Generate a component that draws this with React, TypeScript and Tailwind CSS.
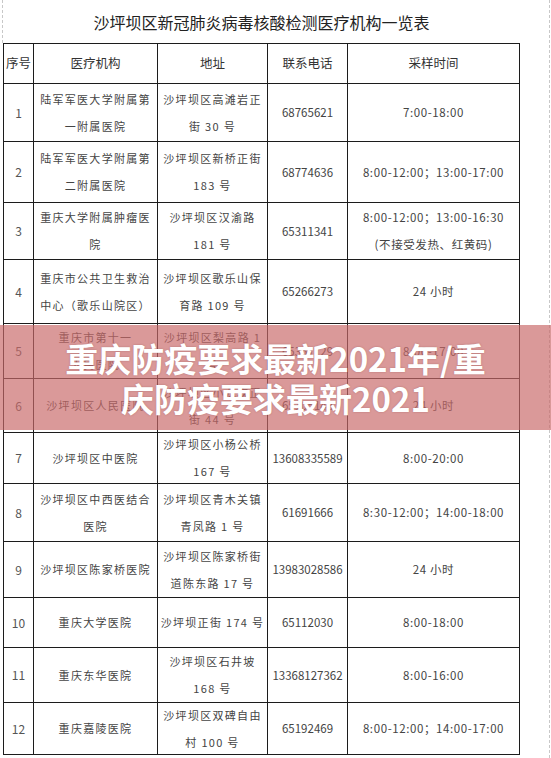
import React from "react";

type Row = {
  no: string;
  org: string[];
  addr: string[];
  phone: string;
  time: string[];
  h: string;
};

const rows: Row[] = [
  { no: "1", org: ["陆军军医大学附属第", "一附属医院"], addr: ["沙坪坝区高滩岩正", "街 30 号"], phone: "68765621", time: ["7:00-18:00"], h: "h-[58px]" },
  { no: "2", org: ["陆军军医大学附属第", "二附属医院"], addr: ["沙坪坝区新桥正街", "183 号"], phone: "68774636", time: ["8:00-12:00；13:00-17:00"], h: "h-[61px]" },
  { no: "3", org: ["重庆大学附属肿瘤医", "院"], addr: ["沙坪坝区汉渝路", "181 号"], phone: "65311341", time: ["8:00-12:00；13:00-16:30", "(不接受发热、红黄码)"], h: "h-[57px]" },
  { no: "4", org: ["重庆市公共卫生救治", "中心（歌乐山院区）"], addr: ["沙坪坝区歌乐山保", "育路 109 号"], phone: "65266273", time: ["24 小时"], h: "h-[64px]" },
  { no: "5", org: ["重庆市第十一", "人民医院"], addr: ["沙坪坝区梨高路 1", "号"], phone: "65351129", time: ["8:00-17:00"], h: "h-[55px]" },
  { no: "6", org: ["沙坪坝区人民医院"], addr: ["沙坪坝区小龙坎正", "街 44 号"], phone: "65105148", time: ["24 小时"], h: "h-[54px]" },
  { no: "7", org: ["沙坪坝区中医院"], addr: ["沙坪坝区小杨公桥", "167 号"], phone: "13608335589", time: ["8:00-20:00"], h: "h-[51px]" },
  { no: "8", org: ["沙坪坝区中西医结合", "医院"], addr: ["沙坪坝区青木关镇", "青凤路 1 号"], phone: "61691666", time: ["8:30-12:00；14:00-18:00"], h: "h-[58px]" },
  { no: "9", org: ["沙坪坝区陈家桥医院"], addr: ["沙坪坝区陈家桥街", "道陈东路 17 号"], phone: "13983028586", time: ["24 小时"], h: "h-[56px]" },
  { no: "10", org: ["重庆大学医院"], addr: ["沙坪坝正街 174 号"], phone: "65112030", time: ["8:00-18:00"], h: "h-[50px]" },
  { no: "11", org: ["重庆东华医院"], addr: ["沙坪坝区石井坡", "168 号"], phone: "13368127362", time: ["8:00-16:00"], h: "h-[55px]" },
  { no: "12", org: ["重庆嘉陵医院"], addr: ["沙坪坝区双碑自由", "村 100 号"], phone: "65192469", time: ["8:00-12:00；14:00-17:00"], h: "h-[52px]" },
];

const cell = "flex flex-col items-center justify-center border-r border-b border-[#1c1c1c] text-center";

function Lines({ lines, track }: { lines: string[]; track?: string }) {
  return (
    <>
      {lines.map((l, i) => (
        <div key={i} className={`leading-[27px] whitespace-nowrap ${track ?? ""}`}>
          {l}
        </div>
      ))}
    </>
  );
}

export default function App() {
  return (
    <div
      className="relative w-[551px] h-[758px] bg-white overflow-hidden"
      style={{ fontFamily: '"Noto Sans CJK SC", "Noto Sans", sans-serif' }}
    >
      <div className="absolute left-[2px] top-0 h-[43px] border-l border-dashed border-[#c8c8c8]" />
      <div className="absolute left-[549px] top-0 h-full border-l border-dashed border-[#c8c8c8]" />

      <div className="ml-[3px] w-[517px]">
        <div className="h-[43px] flex items-center justify-center text-[16px] text-[#222]">
          沙坪坝区新冠肺炎病毒核酸检测医疗机构一览表
        </div>

        <div className="grid grid-cols-[30px_124px_110px_80px_172px] border-l border-t border-[#1c1c1c]">
          {["序号", "医疗机构", "地址", "联系电话", "采样时间"].map((t) => (
            <div key={t} className={`${cell} h-[40px] text-[12.5px] text-[#333]`}>
              {t}
            </div>
          ))}

          {rows.map((r) => (
            <React.Fragment key={r.no}>
              <div className={`${cell} ${r.h} text-[12px] text-[#555]`}>{r.no}</div>
              <div className={`${cell} ${r.h} text-[11px] text-[#444]`}>
                <Lines lines={r.org} track="tracking-[1.3px]" />
              </div>
              <div className={`${cell} ${r.h} text-[11px] text-[#444]`}>
                <Lines lines={r.addr} track="tracking-[1.3px]" />
              </div>
              <div className={`${cell} ${r.h} text-[11.5px] text-[#444]`}>
                <Lines lines={[r.phone]} />
              </div>
              <div className={`${cell} ${r.h} text-[11.5px] text-[#444]`}>
                <Lines lines={r.time} track="tracking-[0.6px]" />
              </div>
            </React.Fragment>
          ))}
        </div>
      </div>

      <div className="absolute left-0 top-[325px] w-[551px] h-[105px] bg-[rgba(200,105,105,0.68)] flex flex-col items-center justify-center">
        <div className="text-white font-bold text-[33px] leading-[40px] text-center whitespace-nowrap [text-shadow:0_0_2px_rgba(120,60,60,0.4)]">
          <div>重庆防疫要求最新2021年/重</div>
          <div>庆防疫要求最新2021</div>
        </div>
      </div>
    </div>
  );
}
